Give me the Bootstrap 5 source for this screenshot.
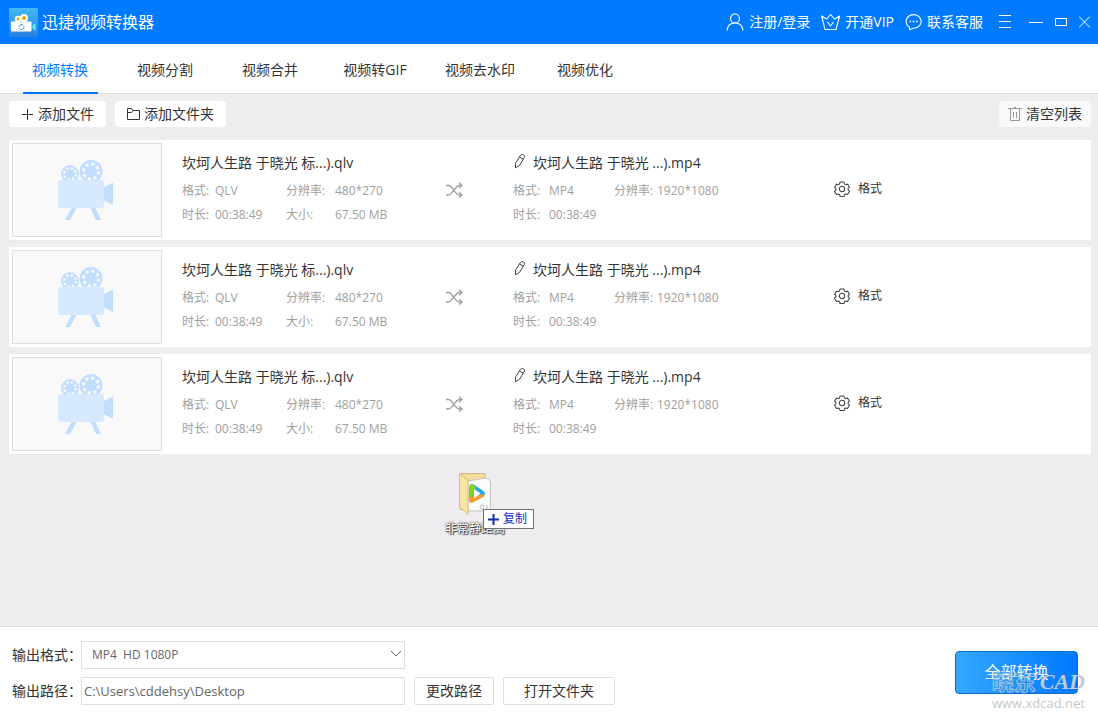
<!DOCTYPE html>
<html lang="zh-CN">
<head>
<meta charset="utf-8">
<meta name="viewport" content="width=device-width, initial-scale=1">
<title>迅捷视频转换器</title>
<link href="https://cdn.jsdelivr.net/npm/bootstrap@5.3.0/dist/css/bootstrap.min.css" rel="stylesheet">
<style>
  :root { --brand: #007bff; --edge: #dedede; --ink: #333; --muted: #a0a0a0; }
  body { font-family: "Open Sans", "Noto Sans CJK SC", sans-serif; font-size: 14px; line-height: 20px; color: var(--ink); background: #eeecef; }
  svg { display: block; flex: none; }
  svg.line { fill: none; stroke: currentColor; }

  .app-header { background: var(--brand); height: 44px; padding: 0 8px 0 9px; }
  .app-title { font-size: 16px; line-height: 24px; }
  .app-header a { color: #fff; text-decoration: none; gap: 5px; }
  .app-header button { background: none; border: 0; padding: 0; color: #fff; }
  .account-links { gap: 11px; }
  .window-tools { gap: 12px; margin-left: 16px; }
  .menu-btn { margin-right: 6px; }

  .mode-tabs { background: #fff; height: 50px; padding-left: 8px; border-bottom: 1px solid var(--edge); }
  .mode-tabs .nav-link { width: 105px; height: 50px; padding: 16px 1px 0 0; color: var(--ink); text-align: center; position: relative; }
  .mode-tabs .nav-link.active { color: var(--brand); }
  .mode-tabs .nav-link.active::after { content: ""; position: absolute; left: 15px; right: 15px; bottom: 0; height: 2px; background: var(--brand); }

  .work-area { padding: 7px 7px 0 9px; }
  .tool-row { gap: 9px; }
  .tool-btn { background: #fff; border: 0; border-radius: 4px; height: 26px; padding: 0 12px; color: var(--ink); white-space: nowrap; }
  .tool-btn.pale { background: #f9f9f9; padding: 0 9px; }
  .tool-btn.pale svg { color: #999; }

  .job-list { margin-top: 13px; gap: 7px; }
  .job { background: #fff; height: 100px; padding: 3px; }
  .thumb { width: 150px; height: 94px; background: #f9f9f9; border: 1px solid var(--edge); padding-right: 2px; margin-right: 20px; flex: none; }
  .job-source { width: 264px; padding-top: 10px; }
  .job-swap { width: 67px; padding-top: 39px; color: var(--muted); }
  .job-target { width: 321px; padding-top: 10px; }
  .job-name { height: 26px; white-space: nowrap; }
  .meta { display: grid; font-size: 12px; line-height: 24px; color: var(--muted); margin: 0; white-space: nowrap; }
  .meta dt, .meta dd { font-weight: 400; margin: 0; line-height: 24px; }
  .meta-source { grid-template-columns: 33px 71px 49px auto; }
  .meta-target { grid-template-columns: 36px 65px 43px auto; }
  .job-format { background: none; border: 0; padding: 0; font-size: 12px; color: var(--ink); gap: 8px; height: 92px; }

  .drop-zone { position: relative; min-height: 172px; }
  .drag-ghost { position: absolute; top: 19px; left: calc(50% - 106px); width: 62px; }
  .ghost-name { font-size: 12px; line-height: 16px; color: #fff; text-shadow: 1px 1px 1px #333, 0 0 2px #444, 0 0 1px #555; white-space: nowrap; margin-top: 6px; }
  .copy-tip { position: absolute; left: 39px; top: 36px; width: 51px; height: 20px; background: #fff; border: 1px solid #707070; color: #1030b8; font-size: 12px; line-height: 18px; gap: 4px; padding-left: 4px; white-space: nowrap; }

  .output-bar { background: #fff; border-top: 1px solid var(--edge); padding: 14px 20px 13px 12px; position: relative; }
  .output-grid { display: grid; grid-template-columns: 69px minmax(160px, 324px) auto; row-gap: 8px; align-items: center; }
  .output-grid label { white-space: nowrap; }
  .field { width: 100%; height: 28px; border: 1px solid var(--edge); border-radius: 0; background: #fff; color: #666; font-size: 12px; line-height: 18px; outline: 0; }
  .field-path { padding: 0 2px; font-size: 13px; }
  .select-wrap { position: relative; }
  .select-wrap select { appearance: none; padding: 0 24px 0 10px; }
  .select-wrap svg { position: absolute; right: 3px; top: 9px; color: #666; pointer-events: none; }
  .path-btn { background: #fff; border: 1px solid var(--edge); border-radius: 2px; height: 28px; padding: 0; width: 80px; color: var(--ink); }
  .path-btn.wide { width: 112px; }
  .path-actions { gap: 9px; margin-left: 9px; }
  .convert-btn { width: 123px; height: 43px; margin-bottom: 2px; border: 1px solid #0a6bd0; border-radius: 4px; color: #fff; font-size: 16px; background: linear-gradient(90deg, #35a8ff, #0079ff); }
  .site-mark { position: absolute; right: 13px; bottom: 7px; color: #c8c8c8; text-align: right; font-size: 13px; line-height: 16px; pointer-events: none; }
  .mark-logo { height: 27px; line-height: 27px; gap: 4px; }
  .mark-cn { font-size: 22px; font-weight: 700; color: transparent; -webkit-text-stroke: 1px #a9bfd6; }
  .mark-en { font-family: "Liberation Serif", serif; font-style: italic; font-weight: 700; font-size: 22px; color: #c5cad0; }
</style>
</head>
<body class="d-flex flex-column min-vh-100">

<svg width="0" height="0" class="position-absolute" aria-hidden="true">
  <symbol id="camera" viewBox="0 0 56 61">
    <g fill="#c2deff">
      <circle cx="33" cy="11.500" r="11.500"/><circle cx="12" cy="14" r="9"/>
      <path d="M46 27l9-4.500v22.500l-9-4.500zM14 47h5l-7 13H7zM32 47h5l6 13h-5z"/>
    </g>
    <circle cx="33" cy="11.500" r="7.500" fill="none" stroke="#f9f9f9" stroke-width="3" stroke-dasharray="3.200 2.690"/>
    <circle cx="12" cy="14" r="5.800" fill="none" stroke="#f9f9f9" stroke-width="2.400" stroke-dasharray="2.400 2.155"/>
    <rect y="20" width="46" height="28" rx="3" fill="#d6e9ff"/>
  </symbol>
  <symbol id="shuffle" viewBox="0 0 18 16">
    <g fill="none" stroke="currentColor" stroke-width="1.300"><path d="M0 3.500h2.500c4 0 6.500 9.500 11 9.500h2.500M0 13h2.500c4 0 6.500-9.500 11-9.500h2.500M13 .8l3 2.700-3 2.700M13 10.300l3 2.700-3 2.700"/></g>
  </symbol>
  <symbol id="pencil" viewBox="0 0 12 16">
    <g fill="none" stroke="#444" stroke-width="1" stroke-linejoin="round"><path d="M2.500 14.800V10.300L7.300 2.600q1.300-1.700 3-.8 1.800 1 .9 2.900L6.500 12.400zM6.500 4l3.800 2.200"/></g>
  </symbol>
  <symbol id="gear" viewBox="0 0 18 18">
    <g fill="none" stroke="#444" stroke-width="1.200"><circle cx="9" cy="9" r="3"/><path d="M6.800 1.200h4.400l.6 2.100 1.300.8 2.200-.6 2.100 3.700-1.500 1.100v1.700l1.500 1.500-2.200 3.700-2.100-.6-1.300.8-.6 2.100H6.800l-.6-2.100-1.300-.8-2.100.6L.6 11.500l1.500-1.500V8.300L.6 7.200l2.200-3.700 2.100.6 1.300-.8z" stroke-linejoin="round"/></g>
  </symbol>
</svg>

<header class="app-header d-flex align-items-center text-white">
  <svg width="29" height="29" viewBox="0 0 29 29" aria-hidden="true">
    <defs><linearGradient id="logoSky" x2="0" y2="1"><stop stop-color="#43b9f7"/><stop offset="1" stop-color="#2b7ee0"/></linearGradient></defs>
    <rect width="29" height="29" rx="1" fill="url(#logoSky)"/>
    <circle cx="9" cy="11" r="2.300" fill="#f6a800" stroke="#fff" stroke-width="1.800"/>
    <circle cx="15" cy="10" r="3" fill="#f6a800" stroke="#fff" stroke-width="2"/>
    <rect x="2" y="13.500" width="20.500" height="10" rx="1" fill="#fff"/>
    <path d="M23.500 17.500l3-2.500v8l-3-2.500z" fill="#5ff0dc"/>
    <path d="M10 19a2.500 2.500 0 0 1 4.300-1.700M15 18.500a2.500 2.500 0 0 1-4.500 2" fill="none" stroke="#3b86e8" stroke-width="1"/>
  </svg>
  <h1 class="app-title fw-normal mb-0 ms-1 text-nowrap">迅捷视频转换器</h1>
  <nav class="account-links d-flex align-items-center ms-auto text-nowrap">
    <a href="#" class="d-flex align-items-center"><svg class="line" width="18" height="18" viewBox="0 0 18 18" stroke-width="1.200"><circle cx="9" cy="5.500" r="4.500"/><path d="M1 17.500c.5-4.500 3-7.500 8-7.500s7.500 3 8 7.500"/></svg>注册/登录</a>
    <a href="#" class="d-flex align-items-center"><svg class="line" width="19" height="18" viewBox="0 0 19 18" stroke-width="1.100" stroke-linejoin="round"><path d="M4 16.500L.6 3l5 3 4-4.500 4 4.500 5-3L15 16.500zM6.500 9l3 4 3-4"/></svg>开通VIP</a>
    <a href="#" class="d-flex align-items-center"><svg class="line" width="17" height="18" viewBox="0 0 17 18" stroke-width="1.100"><path d="M4.500 16.800v-2.600A7.500 6.800 0 1 1 8.200 15.300z"/><path d="M4.500 8.500h1.600M7.700 8.500h1.600M10.900 8.500h1.600" stroke-width="1.600"/></svg>联系客服</a>
  </nav>
  <div class="window-tools d-flex align-items-center">
    <button type="button" aria-label="菜单" class="menu-btn"><svg class="line" width="12" height="14" viewBox="0 0 12 14"><path d="M0 .5h12M0 6.500h12M0 12.500h12"/></svg></button>
    <button type="button" aria-label="最小化"><svg class="line" width="14" height="9" viewBox="0 0 14 9"><path d="M0 4.500h14"/></svg></button>
    <button type="button" aria-label="最大化"><svg class="line" width="12" height="8" viewBox="0 0 12 8"><path d="M.5 .5h11v7H.5z"/></svg></button>
    <button type="button" aria-label="关闭"><svg class="line" width="11" height="12" viewBox="0 0 11 12"><path d="M0 .5l11 11M11 .5l-11 11"/></svg></button>
  </div>
</header>

<nav class="mode-tabs nav flex-nowrap">
  <a class="nav-link active" aria-current="page" href="#">视频转换</a>
  <a class="nav-link" href="#">视频分割</a>
  <a class="nav-link" href="#">视频合并</a>
  <a class="nav-link" href="#">视频转GIF</a>
  <a class="nav-link" href="#">视频去水印</a>
  <a class="nav-link" href="#">视频优化</a>
</nav>

<main class="work-area flex-grow-1 d-flex flex-column">
  <div class="tool-row d-flex align-items-center">
    <button type="button" class="tool-btn d-flex align-items-center gap-1"><svg class="line" width="13" height="13" viewBox="0 0 13 13"><path d="M1 6.500h11M6.500 1v11"/></svg>添加文件</button>
    <button type="button" class="tool-btn d-flex align-items-center gap-1"><svg class="line" width="13" height="12" viewBox="0 0 13 12"><path d="M.5 11.500V.5h4l1.500 2h6.500v9zM.5 4.500h4l1.500-2"/></svg>添加文件夹</button>
    <button type="button" class="tool-btn pale d-flex align-items-center gap-1 ms-auto"><svg class="line" width="14" height="16" viewBox="0 0 14 16"><path d="M0 2.500h14M6 1.500h2M2.500 2.500v12h9v-12M5.500 6v6M8.500 6v6"/></svg>清空列表</button>
  </div>

  <ul class="job-list list-unstyled d-flex flex-column mb-0">
    <li class="job d-flex">
      <div class="thumb d-flex align-items-center justify-content-center"><svg width="56" height="61"><use href="#camera"/></svg></div>
      <div class="job-source"><div class="job-name">坎坷人生路 于晓光 标...).qlv</div>
        <dl class="meta meta-source"><dt>格式:</dt><dd>QLV</dd><dt>分辨率:</dt><dd>480*270</dd><dt>时长:</dt><dd>00:38:49</dd><dt>大小:</dt><dd>67.50 MB</dd></dl></div>
      <div class="job-swap"><svg width="18" height="16"><use href="#shuffle"/></svg></div>
      <div class="job-target"><div class="job-name d-flex gap-2"><svg width="12" height="16"><use href="#pencil"/></svg>坎坷人生路 于晓光 ...).mp4</div>
        <dl class="meta meta-target"><dt>格式:</dt><dd>MP4</dd><dt>分辨率:</dt><dd>1920*1080</dd><dt>时长:</dt><dd>00:38:49</dd></dl></div>
      <button type="button" class="job-format d-flex align-items-center"><svg width="16" height="16"><use href="#gear"/></svg>格式</button>
    </li>
    <li class="job d-flex">
      <div class="thumb d-flex align-items-center justify-content-center"><svg width="56" height="61"><use href="#camera"/></svg></div>
      <div class="job-source"><div class="job-name">坎坷人生路 于晓光 标...).qlv</div>
        <dl class="meta meta-source"><dt>格式:</dt><dd>QLV</dd><dt>分辨率:</dt><dd>480*270</dd><dt>时长:</dt><dd>00:38:49</dd><dt>大小:</dt><dd>67.50 MB</dd></dl></div>
      <div class="job-swap"><svg width="18" height="16"><use href="#shuffle"/></svg></div>
      <div class="job-target"><div class="job-name d-flex gap-2"><svg width="12" height="16"><use href="#pencil"/></svg>坎坷人生路 于晓光 ...).mp4</div>
        <dl class="meta meta-target"><dt>格式:</dt><dd>MP4</dd><dt>分辨率:</dt><dd>1920*1080</dd><dt>时长:</dt><dd>00:38:49</dd></dl></div>
      <button type="button" class="job-format d-flex align-items-center"><svg width="16" height="16"><use href="#gear"/></svg>格式</button>
    </li>
    <li class="job d-flex">
      <div class="thumb d-flex align-items-center justify-content-center"><svg width="56" height="61"><use href="#camera"/></svg></div>
      <div class="job-source"><div class="job-name">坎坷人生路 于晓光 标...).qlv</div>
        <dl class="meta meta-source"><dt>格式:</dt><dd>QLV</dd><dt>分辨率:</dt><dd>480*270</dd><dt>时长:</dt><dd>00:38:49</dd><dt>大小:</dt><dd>67.50 MB</dd></dl></div>
      <div class="job-swap"><svg width="18" height="16"><use href="#shuffle"/></svg></div>
      <div class="job-target"><div class="job-name d-flex gap-2"><svg width="12" height="16"><use href="#pencil"/></svg>坎坷人生路 于晓光 ...).mp4</div>
        <dl class="meta meta-target"><dt>格式:</dt><dd>MP4</dd><dt>分辨率:</dt><dd>1920*1080</dd><dt>时长:</dt><dd>00:38:49</dd></dl></div>
      <button type="button" class="job-format d-flex align-items-center"><svg width="16" height="16"><use href="#gear"/></svg>格式</button>
    </li>
  </ul>

  <section class="drop-zone flex-grow-1">
    <div class="drag-ghost">
      <svg class="mx-auto" width="32" height="42" viewBox="0 0 32 42" aria-hidden="true">
        <path d="M1 .5h25v36H1z" fill="#f6dc9a" stroke="#c9b98c"/>
        <path d="M9 8l18-3 4.500 3v30H9z" fill="#fbfbfb" stroke="#c4c4c4"/>
        <path d="M.5 1L9 7v34.500L.5 34z" fill="#fbe3a4" stroke="#d4bd84"/>
        <path d="M10.500 13q1-3 4-1.500l10 6.500q3 3 0 5.500l-11 6q-3 .5-3.500-2z" fill="#27a9ee"/>
        <path d="M10.500 13q1-3 4-1.500l2 3-4 14-2.500-1z" fill="#7ed321"/>
        <path d="M10 23l4 1 10-3 1.500 2-12 6.500q-3 .5-3.500-2z" fill="#ff9a1f"/>
        <path d="M15 16l6.500 4.500-6.500 5z" fill="#fff"/>
        <circle cx="23" cy="34" r="2" fill="none" stroke="#bbb"/><path d="M28 32v4" stroke="#bbb"/>
      </svg>
      <div class="ghost-name text-center">非常静距离</div>
      <div class="copy-tip d-flex align-items-center"><svg width="11" height="11" viewBox="0 0 11 11"><path d="M0 5.500h11M5.500 0v11" stroke="#1030b8" stroke-width="2"/></svg>复制</div>
    </div>
  </section>
</main>

<footer class="output-bar d-flex align-items-center justify-content-between">
  <div class="output-grid">
    <label for="format">输出格式：</label>
    <div class="select-wrap"><select id="format" class="field"><option>MP4&nbsp; HD 1080P</option></select><svg class="line" width="12" height="8" viewBox="0 0 12 8"><path d="M1 1l5 5 5-5"/></svg></div>
    <span></span>
    <label for="path">输出路径：</label>
    <input id="path" type="text" class="field field-path" value="C:\Users\cddehsy\Desktop">
    <div class="path-actions d-flex"><button type="button" class="path-btn">更改路径</button><button type="button" class="path-btn wide">打开文件夹</button></div>
  </div>
  <button type="button" class="convert-btn">全部转换</button>
  <div class="site-mark">
    <div class="mark-logo d-flex justify-content-end"><span class="mark-cn">晓东</span><span class="mark-en">CAD</span></div>
    <div>www.xdcad.net</div>
  </div>
</footer>

<script src="https://cdn.jsdelivr.net/npm/bootstrap@5.3.0/dist/js/bootstrap.bundle.min.js"></script>
</body>
</html>
